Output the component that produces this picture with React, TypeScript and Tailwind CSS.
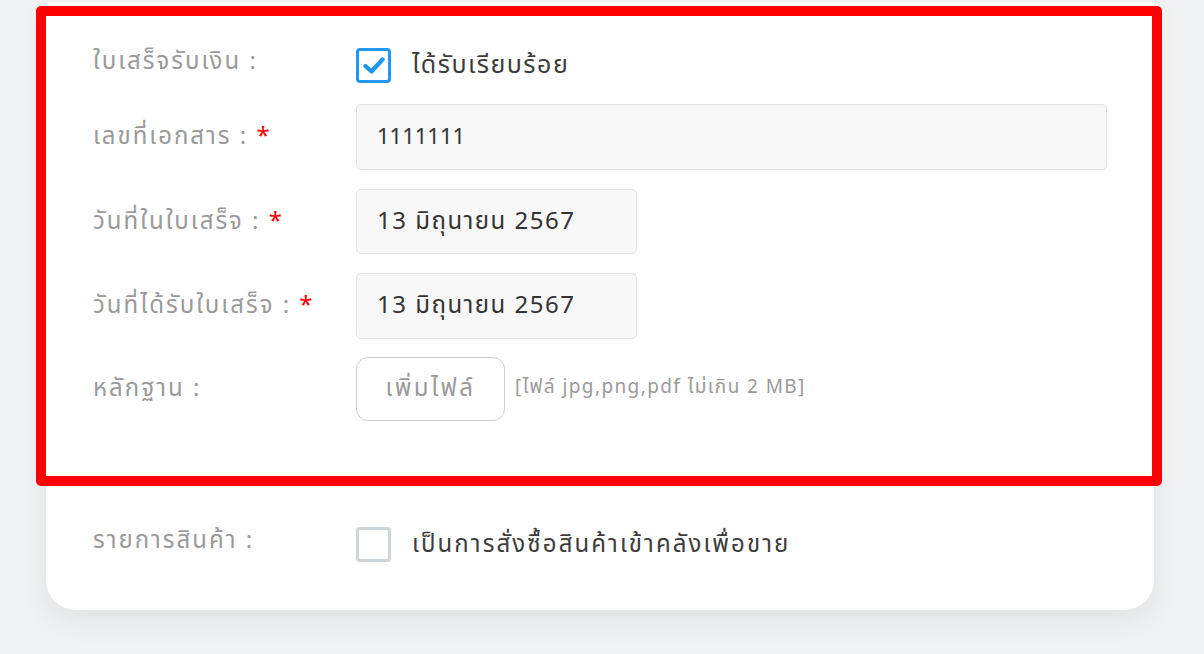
const font = { fontFamily: '"Noto Sans Thai", "Noto Sans", "Liberation Sans", sans-serif' };

function Label({ text, required, className = '' }: { text: string; required?: boolean; className?: string }) {
  return (
    <div className={`w-[263px] shrink-0 text-[24px] tracking-[2px] text-[#9a9a9a] ${className}`}>
      {text} :{required && <span className="text-[#ff0000]"> *</span>}
    </div>
  );
}

function Row({ children, className = '' }: { children: React.ReactNode; className?: string }) {
  return <div className={`flex items-center ${className}`}>{children}</div>;
}

export default function App() {
  return (
    <div className="min-h-[654px] bg-[#f1f2f4] pl-[46px] pr-[50px]" style={font}>
      <div className="relative bg-white rounded-b-[30px] border-t-2 border-[#f0f0f0] shadow-[0_10px_30px_rgba(0,0,0,0.07)] pl-[47px] pr-[47px] pt-[46px] pb-[48px]">
        {/* receipt section */}
        <div className="flex flex-col">
          <Row className="h-[35px]">
            <Label text="ใบเสร็จรับเงิน" className="mb-[7px]" />
            <div className="flex items-center gap-[21px]">
              <div className="w-[35px] h-[35px] rounded-[4px] border-[3px] border-[#2196f3] bg-white flex items-center justify-center">
                <svg width="22" height="17" viewBox="0 0 22 17" fill="none">
                  <path d="M2.5 9 L8.5 14.5 L19.5 2.5" stroke="#2196f3" strokeWidth="4.4" strokeLinecap="round" strokeLinejoin="round" />
                </svg>
              </div>
              <span className="text-[25px] tracking-[1.5px] text-[#3c3c3c]">ได้รับเรียบร้อย</span>
            </div>
          </Row>

          <Row className="mt-[21px]">
            <Label text="เลขที่เอกสาร" required />
            <div className="flex-1 h-[66px] bg-[#f8f8f8] border border-[#e2e2e2] rounded-[5px] flex items-center px-[20px] text-[22px] text-[#333]">
              1111111
            </div>
          </Row>

          <Row className="mt-[19px]">
            <Label text="วันที่ในใบเสร็จ" required />
            <div className="w-[281px] h-[65px] bg-[#f8f8f8] border border-[#e2e2e2] rounded-[5px] flex items-center px-[20px] text-[24px] tracking-[1.5px] text-[#333]">
              13 มิถุนายน 2567
            </div>
          </Row>

          <Row className="mt-[19px]">
            <Label text="วันที่ได้รับใบเสร็จ" required />
            <div className="w-[281px] h-[66px] bg-[#f8f8f8] border border-[#e2e2e2] rounded-[5px] flex items-center px-[20px] text-[24px] tracking-[1.5px] text-[#333]">
              13 มิถุนายน 2567
            </div>
          </Row>

          <Row className="mt-[18px]">
            <Label text="หลักฐาน" />
            <button className="w-[149px] h-[64px] rounded-[12px] border border-[#cfcfcf] bg-white text-[24px] tracking-[2.5px] text-[#9a9a9a]">
              เพิ่มไฟล์
            </button>
            <span className="ml-[10px] mb-[2px] text-[19px] tracking-[1.4px] text-[#9a9a9a]">[ไฟล์ jpg,png,pdf ไม่เกิน 2 MB]</span>
          </Row>
        </div>

        {/* product section */}
        <Row className="mt-[106px] h-[35px]">
          <Label text="รายการสินค้า" className="mb-[8px]" />
          <div className="flex items-center gap-[21px]">
            <div className="w-[35px] h-[35px] rounded-[4px] border-[3px] border-[#cdd4da] bg-white" />
            <span className="text-[24px] tracking-[2.1px] text-[#3c3c3c]">เป็นการสั่งซื้อสินค้าเข้าคลังเพื่อขาย</span>
          </div>
        </Row>

        {/* highlight overlay */}
        <div className="absolute left-[-10px] top-[4px] w-[1126px] h-[480px] border-[10px] border-[#ff0000] rounded-[5px] pointer-events-none" />
      </div>
    </div>
  );
}
